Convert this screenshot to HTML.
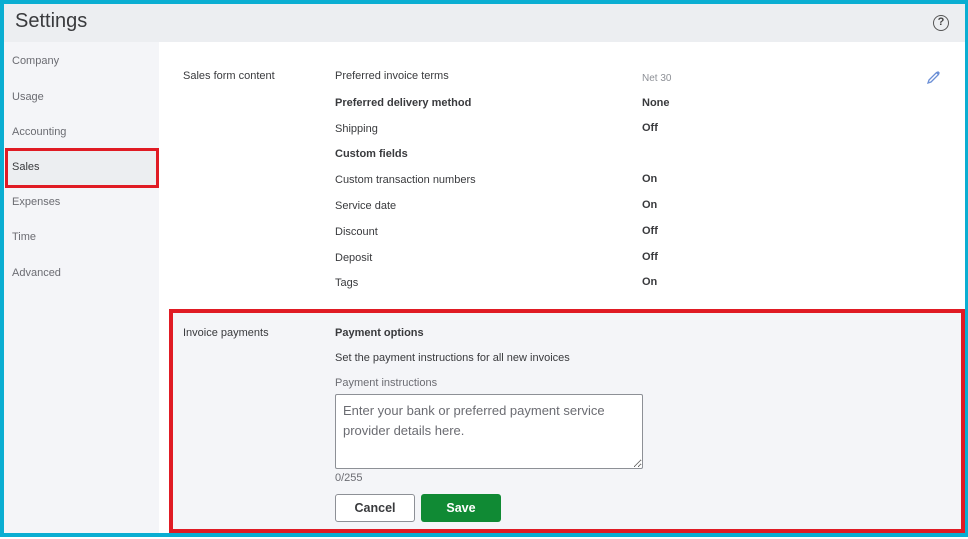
<!DOCTYPE html>
<html><head><style>
*{margin:0;padding:0;box-sizing:border-box}
body{width:968px;height:539px;background:#fff;font-family:"Liberation Sans",sans-serif;position:relative;overflow:hidden;color:#393a3d}
.frame{position:absolute;left:0;top:0;width:968px;height:537px;border:4px solid #0aaed2;border-right-width:3px;background:#fff}
.hdr{position:absolute;left:4px;top:4px;width:961px;height:38px;background:#eceef1}
.hdr h1{position:absolute;left:11px;top:6px;font-size:20px;font-weight:normal;color:#393a3d}
.help{position:absolute;left:929px;top:11px;width:16px;height:16px;border:1.6px solid #555;border-radius:50%;font-size:11px;font-weight:bold;text-align:center;line-height:13px;color:#444}
.side{position:absolute;left:4px;top:42px;width:155px;height:491px;background:#f4f5f8}
.side div{position:absolute;left:8px;font-size:11px;color:#6b6c72}
.selbox{position:absolute;left:5px;top:148px;width:154px;height:40px;border:3px solid #e01b24;background:#eceef1}
.t{position:absolute;font-size:11px;color:#393a3d;white-space:nowrap;margin-top:1px}
.b{font-weight:bold}
.pay{position:absolute;left:169px;top:309px;width:796px;height:224px;border:4px solid #e01b24;background:#f4f5f8}
textarea{position:absolute;left:335px;top:394px;width:308px;height:75px;border:1px solid #8d9096;border-radius:2px;background:#fff;font-family:"Liberation Sans",sans-serif;font-size:13px;padding:6px 7px;color:#6b6c72;line-height:20px;resize:both}
.btn{position:absolute;top:494px;height:28px;border-radius:3px;font-size:12.5px;font-weight:bold;text-align:center;line-height:26px}
</style></head><body>
<div class="frame"></div>
<div class="hdr"><h1>Settings</h1><div class="help">?</div></div>
<div class="side">
<div style="top:13px">Company</div>
<div style="top:49px">Usage</div>
<div style="top:84px">Accounting</div>
<div style="top:154px">Expenses</div>
<div style="top:189px">Time</div>
<div style="top:225px">Advanced</div>
</div>
<div class="selbox"></div>
<div class="t" style="left:12px;top:160px;color:#393a3d">Sales</div>

<div class="t" style="left:183px;top:69px">Sales form content</div>
<div class="t" style="left:335px;top:69px">Preferred invoice terms</div>
<div class="t" style="left:642px;top:72px;font-size:10px;color:#8d9096">Net 30</div>
<svg style="position:absolute;left:926px;top:70px" width="15" height="15" viewBox="0 0 15 15"><path d="M2 13 L3 10 L10.5 2.5 L12.5 4.5 L5 12 Z" fill="none" stroke="#6b8fd6" stroke-width="1.3"/><path d="M10.5 2.5 L12 1 L14 3 L12.5 4.5Z" fill="#6b8fd6"/></svg>
<div class="t b" style="left:335px;top:96px">Preferred delivery method</div>
<div class="t b" style="left:642px;top:96px">None</div>
<div class="t" style="left:335px;top:122px">Shipping</div>
<div class="t b" style="left:642px;top:121px">Off</div>
<div class="t b" style="left:335px;top:147px">Custom fields</div>
<div class="t" style="left:335px;top:173px">Custom transaction numbers</div>
<div class="t b" style="left:642px;top:172px">On</div>
<div class="t" style="left:335px;top:199px">Service date</div>
<div class="t b" style="left:642px;top:198px">On</div>
<div class="t" style="left:335px;top:225px">Discount</div>
<div class="t b" style="left:642px;top:224px">Off</div>
<div class="t" style="left:335px;top:251px">Deposit</div>
<div class="t b" style="left:642px;top:250px">Off</div>
<div class="t" style="left:335px;top:276px">Tags</div>
<div class="t b" style="left:642px;top:275px">On</div>

<div class="pay"></div>
<div class="t" style="left:183px;top:326px">Invoice payments</div>
<div class="t b" style="left:335px;top:326px">Payment options</div>
<div class="t" style="left:335px;top:351px">Set the payment instructions for all new invoices</div>
<div class="t" style="left:335px;top:376px;color:#6b6c72">Payment instructions</div>
<textarea>Enter your bank or preferred payment service provider details here.</textarea>
<div class="t" style="left:335px;top:471px;color:#6b6c72">0/255</div>
<div class="btn" style="left:335px;width:80px;border:1px solid #8d9096;background:#fff;color:#393a3d">Cancel</div>
<div class="btn" style="left:421px;width:80px;background:#108a34;color:#fff;line-height:28px">Save</div>
</body></html>
